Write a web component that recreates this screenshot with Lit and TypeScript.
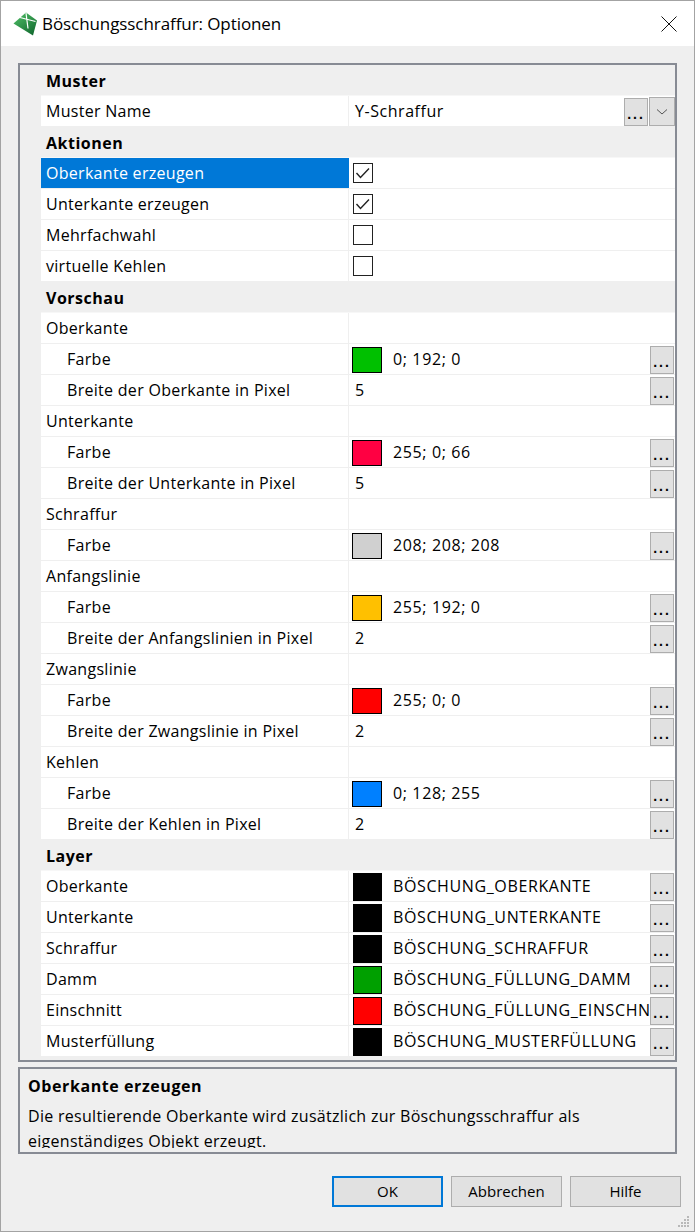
import { LitElement, html, svg, css, nothing } from 'lit';
import { customElement } from 'lit/decorators.js';

type Row = {
  kind?: 'section' | 'group';
  label: string;
  sub?: boolean;
  selected?: boolean;
  check?: boolean;
  swatch?: string;
  value?: string;
  more?: boolean;
  combo?: boolean;
};

const farbe = (swatch: string, value: string): Row => ({ label: 'Farbe', sub: true, swatch, value, more: true });
const breite = (label: string, value: string): Row => ({ label, sub: true, value, more: true });
const layer = (label: string, swatch: string, value: string): Row => ({ label, swatch, value, more: true });

const ROWS: Row[] = [
  { kind: 'section', label: 'Muster' },
  { label: 'Muster Name', value: 'Y-Schraffur', more: true, combo: true },
  { kind: 'section', label: 'Aktionen' },
  { label: 'Oberkante erzeugen', check: true, selected: true },
  { label: 'Unterkante erzeugen', check: true },
  { label: 'Mehrfachwahl', check: false },
  { label: 'virtuelle Kehlen', check: false },
  { kind: 'section', label: 'Vorschau' },
  { kind: 'group', label: 'Oberkante' },
  farbe('#00c000', '0; 192; 0'),
  breite('Breite der Oberkante in Pixel', '5'),
  { kind: 'group', label: 'Unterkante' },
  farbe('#ff0042', '255; 0; 66'),
  breite('Breite der Unterkante in Pixel', '5'),
  { kind: 'group', label: 'Schraffur' },
  farbe('#d0d0d0', '208; 208; 208'),
  { kind: 'group', label: 'Anfangslinie' },
  farbe('#ffc000', '255; 192; 0'),
  breite('Breite der Anfangslinien in Pixel', '2'),
  { kind: 'group', label: 'Zwangslinie' },
  farbe('#ff0000', '255; 0; 0'),
  breite('Breite der Zwangslinie in Pixel', '2'),
  { kind: 'group', label: 'Kehlen' },
  farbe('#0080ff', '0; 128; 255'),
  breite('Breite der Kehlen in Pixel', '2'),
  { kind: 'section', label: 'Layer' },
  layer('Oberkante', '#000000', 'BÖSCHUNG_OBERKANTE'),
  layer('Unterkante', '#000000', 'BÖSCHUNG_UNTERKANTE'),
  layer('Schraffur', '#000000', 'BÖSCHUNG_SCHRAFFUR'),
  layer('Damm', '#00a000', 'BÖSCHUNG_FÜLLUNG_DAMM'),
  layer('Einschnitt', '#ff0000', 'BÖSCHUNG_FÜLLUNG_EINSCHNITT'),
  layer('Musterfüllung', '#000000', 'BÖSCHUNG_MUSTERFÜLLUNG'),
];

@customElement('app-root')
export class AppRoot extends LitElement {
  static styles = css`
    :host {
      display: block;
      width: 695px;
      height: 1232px;
      font-family: 'Open Sans', 'Noto Sans', sans-serif;
      font-size: 16px;
      letter-spacing: 0.29px;
      color: #000;
    }
    * {
      box-sizing: border-box;
    }
    .window {
      position: relative;
      width: 695px;
      height: 1232px;
      border: 1px solid #a3a3a3;
      background: #efefef;
      display: flex;
      flex-direction: column;
    }
    .titlebar {
      height: 45px;
      background: #fff;
      display: flex;
      align-items: center;
      padding: 0 17px 0 12px;
      flex: none;
    }
    .logo {
      width: 24px;
      height: 24px;
      margin-right: 5px;
    }
    .title {
      flex: 1;
      font-size: 17px;
      letter-spacing: -0.08px;
    }
    .close {
      width: 16px;
      height: 16px;
      display: block;
    }
    .body {
      padding: 17px 17px 0;
      flex: 1;
      display: flex;
      flex-direction: column;
    }
    .grid {
      width: 659px;
      height: 999px;
      border: 2px solid #878b94;
      padding-left: 21px;
      flex: none;
    }
    .row {
      height: 31px;
      display: grid;
      grid-template-columns: 308px 1fr;
      background: #fff;
      border-bottom: 1px solid #efefef;
      line-height: 31px;
    }
    .row.section {
      display: block;
      background: #efefef;
      border-bottom: 1px solid #f7f7f7;
      font-weight: 700;
      letter-spacing: 0.5px;
      line-height: 32px;
      padding-left: 5px;
    }
    .name {
      padding-left: 5px;
      border-right: 1px solid #efefef;
      white-space: nowrap;
      overflow: hidden;
    }
    .name.sub {
      padding-left: 26px;
    }
    .name.selected {
      background: #0078d7;
      color: #fff;
      border-right: none;
    }
    .value {
      display: flex;
      align-items: center;
      padding-left: 4px;
      min-width: 0;
    }
    .text {
      white-space: nowrap;
      overflow: hidden;
      flex: 1;
      min-width: 0;
      padding-left: 2px;
      letter-spacing: 0.55px;
    }
    .swatch {
      width: 29px;
      height: 28px;
      border: 1px solid #000;
      flex: none;
      margin-right: 11px;
    }
    .swatch.preview {
      width: 30px;
      height: 26px;
      margin-left: -1px;
    }
    .swatch + .text {
      padding-left: 0;
      letter-spacing: 0.62px;
    }
    .check {
      width: 20px;
      height: 20px;
      border: 1px solid #222;
      background: #fff;
      flex: none;
      display: block;
    }
    .dots {
      width: 24px;
      height: 28px;
      flex: none;
      margin-right: 1px;
      background: #e1e1e1;
      border: 1px solid #adadad;
      font-family: 'Liberation Sans', sans-serif;
      font-weight: 700;
      font-size: 14px;
      letter-spacing: 2px;
      line-height: 30px;
      text-align: center;
    }
    .combo {
      width: 26px;
      height: 29px;
      flex: none;
      background: #e1e1e1;
      border: 1px solid #adadad;
      display: flex;
      align-items: center;
      justify-content: center;
    }
    .description {
      width: 659px;
      height: 87px;
      margin-top: 5px;
      border: 2px solid #878b94;
      padding: 0 8px;
    }
    .description-inner {
      height: 79px;
      overflow: hidden;
      padding-top: 5px;
    }
    .description b {
      display: block;
      letter-spacing: 0.58px;
      line-height: 24px;
      margin-bottom: 6px;
    }
    .description p {
      margin: 0;
      line-height: 25px;
    }
    .footer {
      display: flex;
      justify-content: flex-end;
      gap: 8px;
      margin-top: 22px;
      width: 663px;
    }
    .btn {
      width: 111px;
      height: 31px;
      background: #e1e1e1;
      border: 1px solid #adadad;
      font-size: 15px;
      letter-spacing: 0;
      line-height: 29px;
      text-align: center;
    }
    .btn.primary {
      border: 2px solid #0078d7;
      line-height: 27px;
    }
    .grip {
      position: absolute;
      right: 4px;
      bottom: 3px;
      width: 12px;
      height: 12px;
    }
  `;

  private renderValue(row: Row) {
    return html`<div class="value">
      ${row.check !== undefined
        ? html`<svg class="check" viewBox="0 0 18 18">
            ${row.check
              ? svg`<path d="M2.5 9 L6.5 13.5 L15 4.5" fill="none" stroke="#222" stroke-width="1.4" />`
              : nothing}
          </svg>`
        : nothing}
      ${row.swatch
        ? html`<div class="swatch ${row.sub ? 'preview' : ''}" style="background:${row.swatch}"></div>`
        : nothing}
      ${row.value ? html`<div class="text">${row.value}</div>` : nothing}
      ${row.more ? html`<div class="dots">...</div>` : nothing}
      ${row.combo
        ? html`<div class="combo">
            <svg width="12" height="8" viewBox="0 0 12 8">
              <path d="M1 1.5 L6 6 L11 1.5" fill="none" stroke="#555" stroke-width="1" />
            </svg>
          </div>`
        : nothing}
    </div>`;
  }

  private renderRow(row: Row) {
    if (row.kind === 'section') {
      return html`<div class="row section">${row.label}</div>`;
    }
    const cls = `name ${row.sub ? 'sub' : ''} ${row.selected ? 'selected' : ''}`;
    return html`<div class="row">
      <div class=${cls}>${row.label}</div>
      ${this.renderValue(row)}
    </div>`;
  }

  render() {
    return html`
      <div class="window">
        <div class="titlebar">
          <svg class="logo" viewBox="0 0 24 24">
            <defs>
              <linearGradient id="logo-fill" x1="0.1" y1="0.1" x2="0.8" y2="1">
                <stop offset="0" stop-color="#4cb963" />
                <stop offset="1" stop-color="#136b30" />
              </linearGradient>
            </defs>
            <path d="M0.5 11.5 L13 0.5 L24 8.5 L20 23.5 Z" fill="url(#logo-fill)" />
            <path d="M7 5.5 L22.5 9.5 M13 1 L15 16.5" fill="none" stroke="#fff" stroke-width="1.2" />
          </svg>
          <div class="title">Böschungsschraffur: Optionen</div>
          <svg class="close" viewBox="0 0 16 16">
            <path d="M0.5 0.5 L15.5 15.5 M15.5 0.5 L0.5 15.5" stroke="#111" stroke-width="1" />
          </svg>
        </div>
        <div class="body">
          <div class="grid">${ROWS.map((r) => this.renderRow(r))}</div>
          <div class="description">
            <div class="description-inner">
              <b>Oberkante erzeugen</b>
              <p>Die resultierende Oberkante wird zusätzlich zur Böschungsschraffur als eigenständiges Objekt erzeugt.</p>
            </div>
          </div>
          <div class="footer">
            <div class="btn primary">OK</div>
            <div class="btn">Abbrechen</div>
            <div class="btn">Hilfe</div>
          </div>
        </div>
        <svg class="grip" viewBox="0 0 12 12" fill="#b8b8b8">
          <rect x="9" y="0" width="2" height="2" />
          <rect x="6" y="3" width="2" height="2" />
          <rect x="9" y="3" width="2" height="2" />
          <rect x="3" y="6" width="2" height="2" />
          <rect x="6" y="6" width="2" height="2" />
          <rect x="9" y="6" width="2" height="2" />
          <rect x="0" y="9" width="2" height="2" />
          <rect x="3" y="9" width="2" height="2" />
          <rect x="6" y="9" width="2" height="2" />
          <rect x="9" y="9" width="2" height="2" />
        </svg>
      </div>
    `;
  }
}
